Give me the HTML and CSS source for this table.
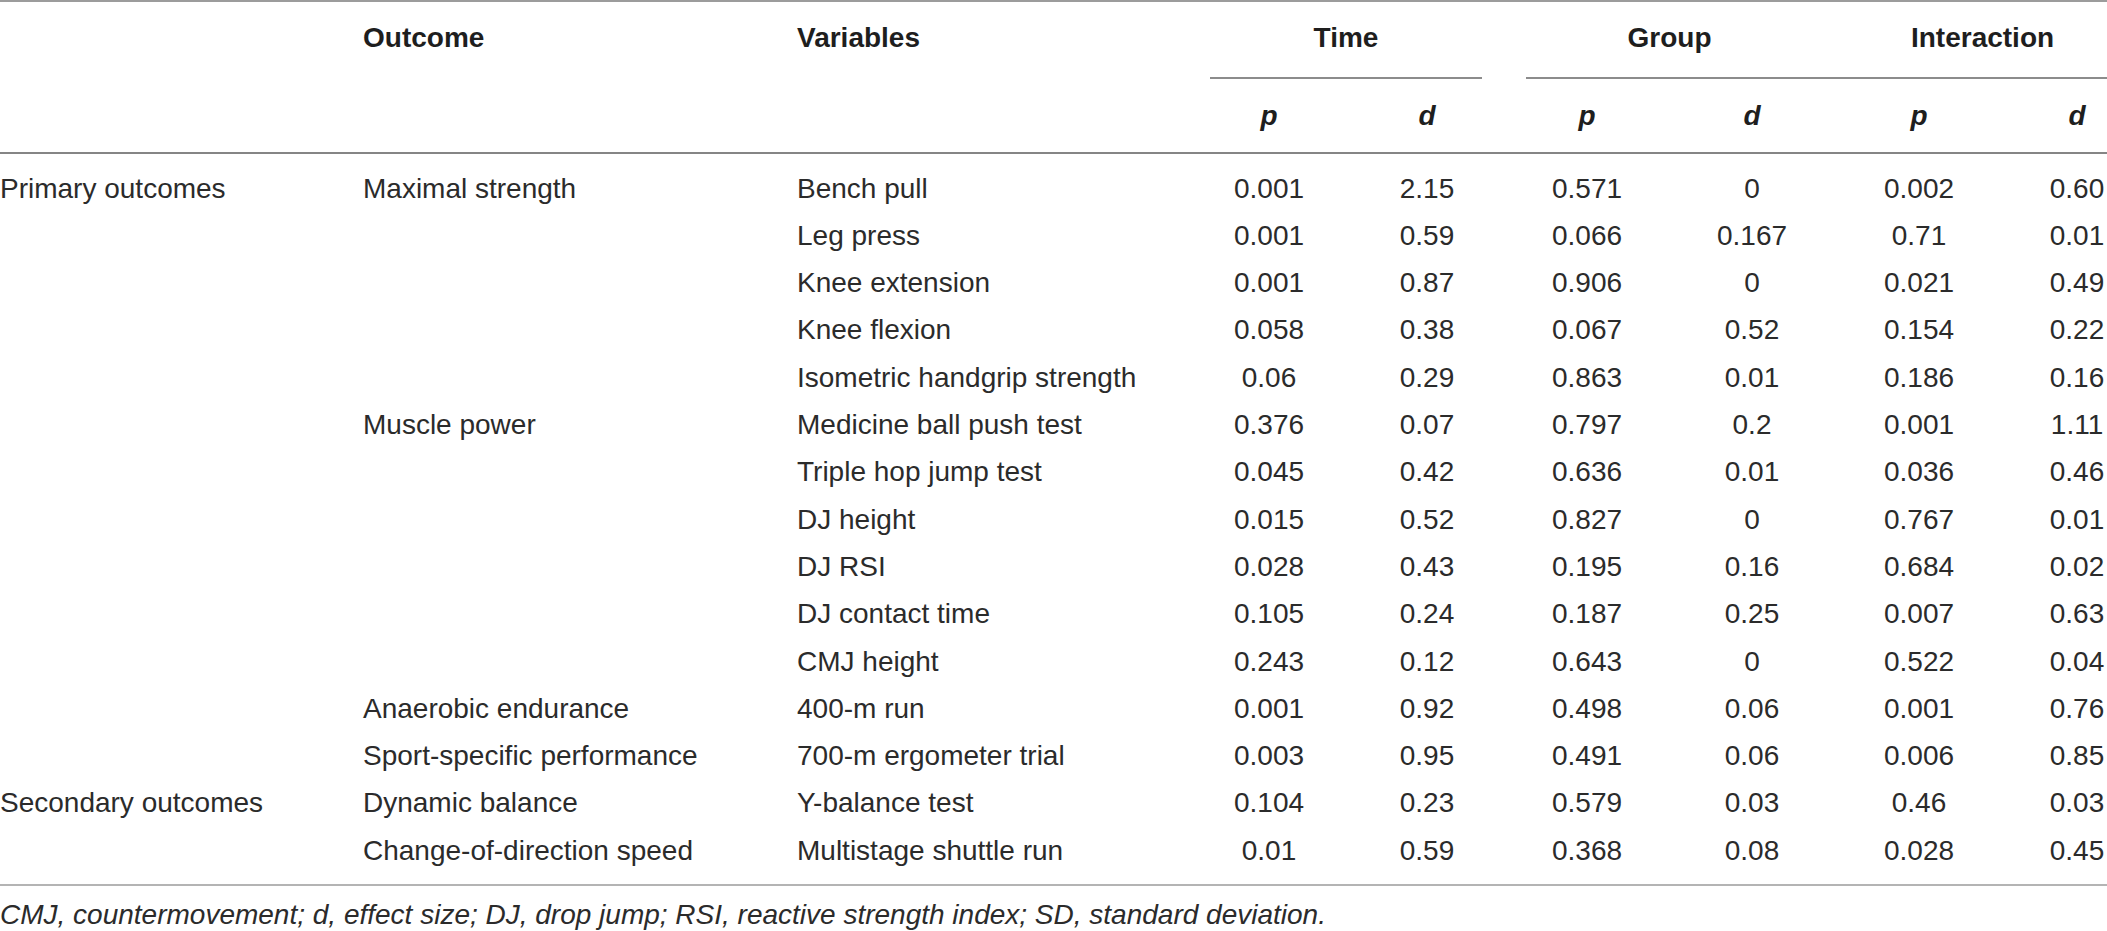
FILE: index.html
```html
<!DOCTYPE html>
<html lang="en">
<head>
  <meta charset="UTF-8" />
  <title>Outcome statistics</title>
  <link rel="stylesheet" href="styles.css">
</head>
<body>
  <div class="frame">
    <table class="stats">
      <colgroup>
        <col class="c-level">
        <col class="c-outcome">
        <col class="c-var">
        <col class="c-p1">
        <col class="c-d1">
        <col class="c-p2">
        <col class="c-d2">
        <col class="c-p3">
        <col class="c-d3">
      </colgroup>
      <thead>
        <tr class="head-top">
          <th></th>
          <th class="left">Outcome</th>
          <th class="left">Variables</th>
          <th colspan="2"><div class="span-line time">Time</div></th>
          <th colspan="2"><div class="span-line group">Group</div></th>
          <th colspan="2"><div class="span-line inter">Interaction</div></th>
        </tr>
        <tr class="head-sub">
          <th></th>
          <th></th>
          <th></th>
          <th><i>p</i></th>
          <th><i>d</i></th>
          <th><i>p</i></th>
          <th><i>d</i></th>
          <th><i>p</i></th>
          <th><i>d</i></th>
        </tr>
      </thead>
      <tbody>
        <tr>
          <td class="left">Primary outcomes</td>
          <td class="left">Maximal strength</td>
          <td class="left">Bench pull</td>
          <td>0.001</td><td>2.15</td><td>0.571</td><td>0</td><td>0.002</td><td>0.60</td>
        </tr>
        <tr>
          <td></td><td></td>
          <td class="left">Leg press</td>
          <td>0.001</td><td>0.59</td><td>0.066</td><td>0.167</td><td>0.71</td><td>0.01</td>
        </tr>
        <tr>
          <td></td><td></td>
          <td class="left">Knee extension</td>
          <td>0.001</td><td>0.87</td><td>0.906</td><td>0</td><td>0.021</td><td>0.49</td>
        </tr>
        <tr>
          <td></td><td></td>
          <td class="left">Knee flexion</td>
          <td>0.058</td><td>0.38</td><td>0.067</td><td>0.52</td><td>0.154</td><td>0.22</td>
        </tr>
        <tr>
          <td></td><td></td>
          <td class="left">Isometric handgrip strength</td>
          <td>0.06</td><td>0.29</td><td>0.863</td><td>0.01</td><td>0.186</td><td>0.16</td>
        </tr>
        <tr>
          <td></td>
          <td class="left">Muscle power</td>
          <td class="left">Medicine ball push test</td>
          <td>0.376</td><td>0.07</td><td>0.797</td><td>0.2</td><td>0.001</td><td>1.11</td>
        </tr>
        <tr>
          <td></td><td></td>
          <td class="left">Triple hop jump test</td>
          <td>0.045</td><td>0.42</td><td>0.636</td><td>0.01</td><td>0.036</td><td>0.46</td>
        </tr>
        <tr>
          <td></td><td></td>
          <td class="left">DJ height</td>
          <td>0.015</td><td>0.52</td><td>0.827</td><td>0</td><td>0.767</td><td>0.01</td>
        </tr>
        <tr>
          <td></td><td></td>
          <td class="left">DJ RSI</td>
          <td>0.028</td><td>0.43</td><td>0.195</td><td>0.16</td><td>0.684</td><td>0.02</td>
        </tr>
        <tr>
          <td></td><td></td>
          <td class="left">DJ contact time</td>
          <td>0.105</td><td>0.24</td><td>0.187</td><td>0.25</td><td>0.007</td><td>0.63</td>
        </tr>
        <tr>
          <td></td><td></td>
          <td class="left">CMJ height</td>
          <td>0.243</td><td>0.12</td><td>0.643</td><td>0</td><td>0.522</td><td>0.04</td>
        </tr>
        <tr>
          <td></td>
          <td class="left">Anaerobic endurance</td>
          <td class="left">400-m run</td>
          <td>0.001</td><td>0.92</td><td>0.498</td><td>0.06</td><td>0.001</td><td>0.76</td>
        </tr>
        <tr>
          <td></td>
          <td class="left">Sport-specific performance</td>
          <td class="left">700-m ergometer trial</td>
          <td>0.003</td><td>0.95</td><td>0.491</td><td>0.06</td><td>0.006</td><td>0.85</td>
        </tr>
        <tr>
          <td class="left">Secondary outcomes</td>
          <td class="left">Dynamic balance</td>
          <td class="left">Y-balance test</td>
          <td>0.104</td><td>0.23</td><td>0.579</td><td>0.03</td><td>0.46</td><td>0.03</td>
        </tr>
        <tr>
          <td></td>
          <td class="left">Change-of-direction speed</td>
          <td class="left">Multistage shuttle run</td>
          <td>0.01</td><td>0.59</td><td>0.368</td><td>0.08</td><td>0.028</td><td>0.45</td>
        </tr>
      </tbody>
    </table>
    <p class="note">CMJ, countermovement; d, effect size; DJ, drop jump; RSI, reactive strength index; SD, standard deviation.</p>
  </div>
</body>
</html>
```
FILE: styles.css
```css
html,
body {
  margin: 0;
  overflow: hidden;
  background: #ffffff;
}

body {
  font-family: "Liberation Sans", Arial, sans-serif;
  font-size: 28px;
  color: #2b2b2b;
}

.frame {
  width: 2107px;
  height: 931px;
  overflow: hidden;
}

.stats {
  width: 2152px;
  table-layout: fixed;
  border-collapse: separate;
  border-spacing: 0;
  border-top: 2px solid #9c9c9c;
  line-height: 33.3px;
}

.c-level { width: 363px; }
.c-outcome { width: 434px; }
.c-var { width: 393px; }
.c-p1 { width: 158px; }
.c-d1 { width: 158px; }
.c-p2 { width: 162px; }
.c-d2 { width: 168px; }
.c-p3 { width: 166px; }
.c-d3 { width: 150px; }

.stats th,
.stats td {
  padding: 7px 0;
  text-align: center;
  white-space: nowrap;
  vertical-align: top;
}

.stats .left {
  text-align: left;
}

.stats th {
  color: #1e1e1e;
  font-weight: bold;
}

.head-top th {
  padding: 19px 0 0;
}

.span-line {
  padding-bottom: 23px;
  border-bottom: 2px solid #8c8c8c;
}

.span-line.time {
  margin: 0 24px 0 20px;
}

.span-line.group {
  margin: 0 23px 0 20px;
}

.span-line.inter {
  margin-left: -23px;
}

.head-sub th {
  padding: 20px 0 19px;
  border-bottom: 2px solid #858585;
}

tbody tr:first-child td {
  padding-top: 18px;
}

tbody tr:last-child td {
  padding-bottom: 17px;
  border-bottom: 2px solid #b4b4b4;
}

.note {
  margin: 12px 0 0;
  font-style: italic;
  line-height: 33.3px;
}
```
